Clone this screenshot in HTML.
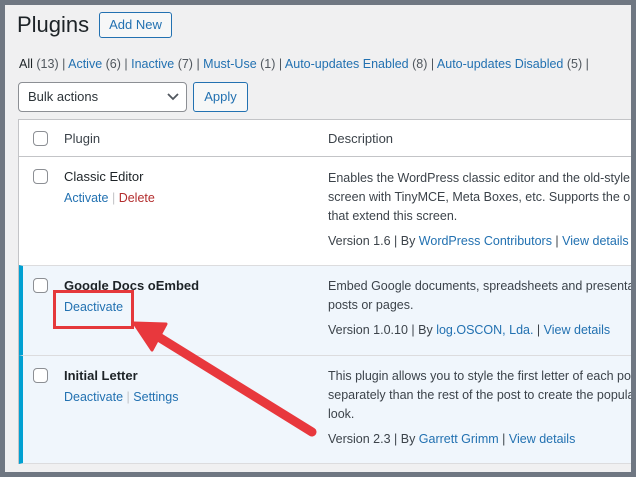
<!DOCTYPE html>
<html><head><style>
*{margin:0;padding:0;box-sizing:border-box}
body{width:636px;height:477px;overflow:hidden;background:#6f7782;font-family:"Liberation Sans",sans-serif;font-size:12.5px;color:#3c434a;position:relative}
#page{position:absolute;left:5px;top:5px;width:626px;height:467px;background:#f0f0f1;overflow:hidden}
.a{position:absolute;white-space:nowrap}
a,.l{color:#2271b1}
.cb{position:absolute;width:15px;height:15px;border:1px solid #8c8f94;border-radius:4px;background:#fff}
</style></head><body>
<div id="page">
<div class="a" style="left:12px;top:7px;font-size:22px;color:#1d2327">Plugins</div>
<div class="a" style="left:94px;top:7px;width:73px;height:26px;border:1px solid #2271b1;border-radius:3px;color:#2271b1;font-size:13px;line-height:24px;text-align:center;background:#f6f7f7">Add New</div>
<div class="a" style="left:14px;top:52px;font-size:12.5px;color:#50575e"><b style="color:#1d2327;font-weight:normal">All</b> (13) | <span class="l">Active</span> (6) | <span class="l">Inactive</span> (7) | <span class="l">Must-Use</span> (1) | <span class="l">Auto-updates Enabled</span> (8) | <span class="l">Auto-updates Disabled</span> (5) |</div>
<div class="a" style="left:13px;top:77px;width:169px;height:30px;border:1px solid #8c8f94;border-radius:4px;background:#fff;padding-left:9px;line-height:28px;font-size:13px;color:#2c3338">Bulk actions<svg style="position:absolute;right:7px;top:10px" width="12" height="8"><path d="M1 1l5 5 5-5" stroke="#50575e" stroke-width="1.8" fill="none"/></svg></div>
<div class="a" style="left:188px;top:77px;width:55px;height:30px;border:1px solid #2271b1;border-radius:3px;color:#2271b1;font-size:13px;line-height:28px;text-align:center;background:#f6f7f7">Apply</div>
<div class="a" style="left:13px;top:114px;width:640px;height:345px;background:#fff;border:1px solid #c3c4c7">
  <div class="a" style="left:0;top:36px;width:640px;border-top:1px solid #c3c4c7"></div>
  <div class="cb" style="left:14px;top:11px"></div>
  <div class="a" style="left:45px;top:11px;font-size:13px">Plugin</div>
  <div class="a" style="left:309px;top:11px;font-size:13px">Description</div>
  <div class="cb" style="left:14px;top:49px"></div>
  <div class="a" style="left:45px;top:49px;font-size:13px;color:#1d2327">Classic Editor</div>
  <div class="a" style="left:45px;top:71px"><span class="l">Activate</span> <span style="color:#c3c4c7">|</span> <span style="color:#b32d2e">Delete</span></div>
  <div class="a" style="left:309px;top:49px;line-height:19px">Enables the WordPress classic editor and the old-style Edit Post<br>screen with TinyMCE, Meta Boxes, etc. Supports the older plugins<br>that extend this screen.</div>
  <div class="a" style="left:309px;top:114px">Version 1.6 | By <span class="l">WordPress Contributors</span> | <span class="l">View details</span></div>
  <div class="a" style="left:0;top:145px;width:640px;height:90px;background:#f0f6fc;border-top:1px solid #dcdcde;border-left:4px solid #00a0d2"></div>
  <div class="cb" style="left:14px;top:158px"></div>
  <div class="a" style="left:45px;top:158px;font-size:13px;font-weight:bold;color:#1d2327">Google Docs oEmbed</div>
  <div class="a l" style="left:45px;top:180px">Deactivate</div>
  <div class="a" style="left:309px;top:157px;line-height:19px">Embed Google documents, spreadsheets and presentations in<br>posts or pages.</div>
  <div class="a" style="left:309px;top:203px">Version 1.0.10 | By <span class="l">log.OSCON, Lda.</span> | <span class="l">View details</span></div>
  <div class="a" style="left:0;top:235px;width:640px;height:109px;background:#f0f6fc;border-top:1px solid #dcdcde;border-left:4px solid #00a0d2;border-bottom:1px solid #dcdcde"></div>
  <div class="cb" style="left:14px;top:248px"></div>
  <div class="a" style="left:45px;top:248px;font-size:13px;font-weight:bold;color:#1d2327">Initial Letter</div>
  <div class="a" style="left:45px;top:270px"><span class="l">Deactivate</span> <span style="color:#c3c4c7">|</span> <span class="l">Settings</span></div>
  <div class="a" style="left:309px;top:247px;line-height:19px">This plugin allows you to style the first letter of each post<br>separately than the rest of the post to create the popular<br>look.</div>
  <div class="a" style="left:309px;top:312px">Version 2.3 | By <span class="l">Garrett Grimm</span> | <span class="l">View details</span></div>
</div>
</div>
<div class="a" style="left:53px;top:290px;width:81px;height:39px;border:3px solid #e5383b"></div>
<svg class="a" style="left:0;top:0" width="636" height="477"><path d="M312 432 L157 336" stroke="#e8383d" stroke-width="9" stroke-linecap="round"/><path d="M134 323 L166 324 L152 350 Z" fill="#e8383d" stroke="#e8383d" stroke-width="3" stroke-linejoin="round"/></svg>
</body></html>
